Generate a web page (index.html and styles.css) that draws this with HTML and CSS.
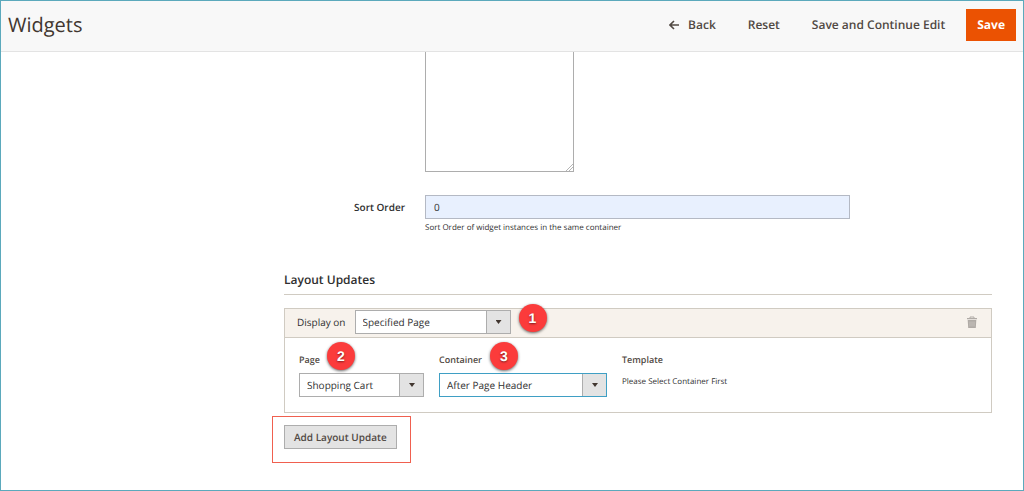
FILE: index.html
```html
<!DOCTYPE html>
<html lang="en">
<head>
<meta charset="utf-8">
<meta name="viewport" content="width=device-width, initial-scale=1">
<title>Widgets</title>
<link rel="stylesheet" href="styles.css">
</head>
<body>
<div class="page">
  <header class="page-header">
    <h1 class="page-title">Widgets</h1>
    <div class="page-actions">
      <button type="button" class="action action-back">
        <svg class="icon-back" viewBox="0 0 10 10" aria-hidden="true"><path d="M5 1 1 5l4 4M1 5h9" fill="none" stroke="currentColor" stroke-width="1.6"/></svg>
        Back
      </button>
      <button type="button" class="action">Reset</button>
      <button type="button" class="action">Save and Continue Edit</button>
      <button type="button" class="action action-primary">Save</button>
    </div>
  </header>

  <main class="content">
    <form>
      <div class="field">
        <div></div>
        <textarea class="stores" aria-label="Store views"></textarea>
      </div>
      <div class="field field-sort">
        <label class="field-label" for="sort-order">Sort Order</label>
        <div>
          <input class="text-input" id="sort-order" type="text" value="0">
          <p class="note">Sort Order of widget instances in the same container</p>
        </div>
      </div>

      <section>
        <h2 class="section-title">Layout Updates</h2>
        <div class="update">
          <div class="update-head">
            <label for="display-on">Display on</label>
            <div class="select select-display">
              <select id="display-on"><option>Specified Page</option></select>
              <span class="step">1</span>
            </div>
            <button type="button" class="delete" aria-label="Remove layout update">
              <svg viewBox="0 0 10 12" aria-hidden="true"><path d="M3 2V1h4v1" fill="none" stroke="currentColor"/><path d="M0 2h10v1.3H0zM.7 4h8.6l-.5 8H1.2z" fill="currentColor"/><path d="M3 5.5v5M5 5.5v5M7 5.5v5" stroke="#d6d1cc" stroke-width=".6"/></svg>
            </button>
          </div>
          <div class="update-body">
            <div class="column">
              <label class="column-label" for="page">Page</label>
              <div class="select select-page">
                <select id="page"><option>Shopping Cart</option></select>
                <span class="step">2</span>
              </div>
            </div>
            <div class="column">
              <label class="column-label" for="container">Container</label>
              <div class="select select-container">
                <select id="container"><option>After Page Header</option></select>
                <span class="step">3</span>
              </div>
            </div>
            <div class="column">
              <span class="column-label">Template</span>
              <p class="template-text">Please Select Container First</p>
            </div>
          </div>
        </div>
        <div class="highlight">
          <button type="button" class="add">Add Layout Update</button>
        </div>
      </section>
    </form>
  </main>
</div>
</body>
</html>
```
FILE: styles.css
```css
* {
  box-sizing: border-box;
}

body {
  margin: 0;
  color: #303030;
  font: 10px/16px "Open Sans", "Noto Sans", sans-serif;
  text-rendering: geometricPrecision;
}

button,
input,
select,
textarea {
  color: inherit;
  font: inherit;
  text-rendering: inherit;
}

.page {
  min-height: 100vh;
  border: 1px solid #5ba9bc;
}

.page-header {
  display: flex;
  align-items: center;
  justify-content: space-between;
  height: 51px;
  padding: 0 7px 2px;
  border-bottom: 1px solid #e3e3e3;
  background: #f8f8f8;
}

.page-title {
  margin: 0;
  color: #41362f;
  font-size: 20px;
  font-weight: 400;
  line-height: 28px;
}

.page-actions {
  display: flex;
  gap: 10px;
}

.action {
  display: flex;
  align-items: center;
  height: 32px;
  padding: 0 11px;
  border: 0;
  background: none;
  color: #514943;
  font-size: 12px;
  font-weight: 600;
}

.action-back {
  gap: 9px;
}

.icon-back {
  width: 10px;
  height: 10px;
}

.action-primary {
  background: #eb5202;
  color: #fff;
  font-weight: 700;
}

.content {
  padding: 0 31px 20px 283px;
}

.field {
  display: grid;
  grid-template-columns: 121px 60%;
  column-gap: 20px;
}

.stores {
  display: block;
  width: 149px;
  height: 120px;
  border: 1px solid #adadad;
  border-top: 0;
  background: #fff;
}

.stores::-webkit-resizer {
  background: linear-gradient(135deg, #fff 74%, #b5b5b5 74% 79%, #fff 79% 84%, #b5b5b5 84% 89%, #fff 89%);
}

.field-sort {
  margin-top: 23px;
}

.field-label {
  font-weight: 600;
  line-height: 24px;
  text-align: right;
}

.text-input {
  display: block;
  width: 100%;
  height: 24px;
  padding: 0 8px;
  border: 1px solid #b4b9c4;
  background: #e8f0fe;
}

.note {
  margin: 1px 0 0;
  font-size: 8px;
}

.section-title {
  margin: 34px 0 13px;
  padding-bottom: 4px;
  border-bottom: 1px solid #d0cbc2;
  font-size: 12px;
  font-weight: 600;
  line-height: 20px;
}

.update {
  border: 1px solid #d0cbc2;
}

.update-head {
  display: flex;
  align-items: center;
  gap: 9px;
  padding: 1px 14px 3px 12px;
  border-bottom: 1px solid #d0cbc2;
  background: #f7f2ec;
}

.select {
  position: relative;
}

.select select {
  display: block;
  width: 100%;
  height: 24px;
  padding: 0 28px 0 7px;
  border: 1px solid #adadad;
  border-radius: 0;
  appearance: none;
  background: linear-gradient(to right, #adadad 1px, #e3e3e3 1px) right / 24px 100% no-repeat #fff;
}

.select::after {
  position: absolute;
  top: 10px;
  right: 9px;
  width: 6px;
  height: 4px;
  background: #41362f;
  clip-path: polygon(0 0, 100% 0, 50% 100%);
  content: "";
  pointer-events: none;
}

.select-display {
  width: 156px;
}

.select-page {
  width: 125px;
}

.select-container {
  width: 168px;
}

.select-container select {
  border-color: #3f9fc4;
}

.step {
  position: absolute;
  display: grid;
  place-items: center;
  width: 28px;
  height: 28px;
  border-radius: 50%;
  background: #fb3b3b;
  box-shadow: 0 1px 3px rgb(0 0 0 / 60%);
  color: #fff;
  font: 700 14px/16px "Liberation Sans", sans-serif;
  text-shadow: 0 1px 2px rgb(0 0 0 / 50%);
}

.select-display .step {
  top: -6px;
  left: 164px;
}

.select-page .step {
  top: -31px;
  left: 28px;
}

.select-container .step {
  top: -31px;
  left: 51px;
}

.delete {
  display: flex;
  margin-left: auto;
  padding: 0;
  border: 0;
  background: none;
  color: #b0aba6;
}

.delete svg {
  width: 10px;
  height: 12px;
}

.update-body {
  display: flex;
  gap: 15px;
  padding: 14px 14px 15px;
}

.column-label {
  display: block;
  margin-bottom: 5px;
  color: #514943;
  font-size: 9px;
  font-weight: 600;
}

.template-text {
  margin: 6px 0 0;
  font-size: 8px;
}

.highlight {
  width: fit-content;
  margin: 3px 0 0 -12px;
  padding: 8px 13px 13px 11px;
  border: 1px solid #f0604f;
}

.add {
  display: block;
  height: 24px;
  padding: 0 9px;
  border: 1px solid #adadad;
  background: #e3e3e3;
  color: #514943;
  font-weight: 600;
}
```
